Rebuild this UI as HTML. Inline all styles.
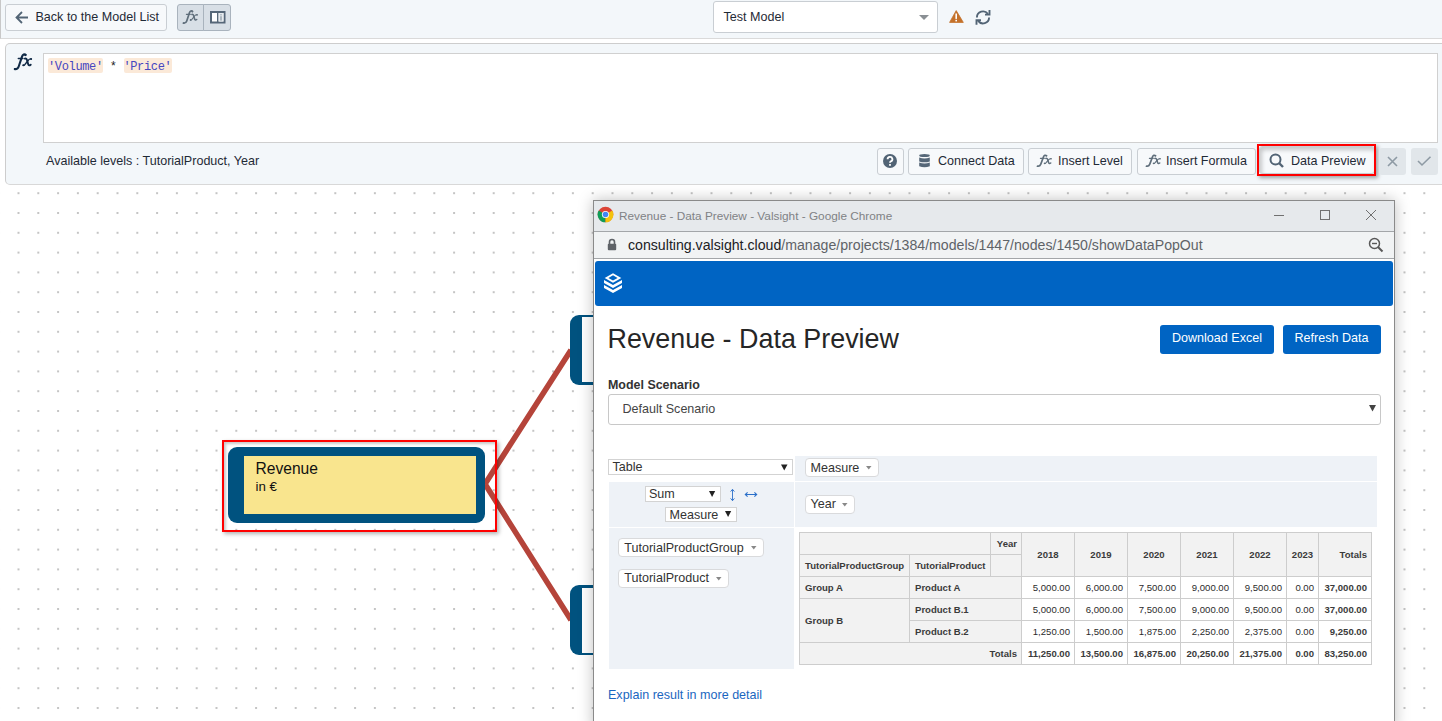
<!DOCTYPE html>
<html><head><meta charset="utf-8">
<style>
*{box-sizing:border-box;margin:0;padding:0}
html,body{width:1442px;height:721px;overflow:hidden;background:#fff;font-family:"Liberation Sans",sans-serif;color:#222;position:relative}
.a{position:absolute}
.btn{position:absolute;border:1px solid #c9ced3;border-radius:3px;background:#f7f9fb;font-size:12.55px;color:#1f2a36;white-space:nowrap}
.t{position:absolute;white-space:nowrap;line-height:1;font-size:12.55px;color:#1f2a36}
</style></head><body>

<!-- dotted canvas -->
<svg class="a" style="left:0;top:185px" width="1442" height="536">
<defs><pattern id="dots" x="17.5" y="7.2" width="19.8" height="19.8" patternUnits="userSpaceOnUse"><rect x="0" y="0" width="2" height="2" fill="#c4c4c4"/></pattern></defs>
<rect width="1442" height="536" fill="url(#dots)"/>
</svg>

<!-- top toolbar -->
<div class="a" style="left:0;top:0;width:1442px;height:39px;background:#f3f7fa;border-bottom:1px solid #dadada;border-left:1px solid #c8c8c8"></div>
<div class="btn" style="left:5px;top:4px;width:162px;height:27px"></div>
<svg class="a" style="left:14px;top:10px" width="16" height="15"><path d="M14 7.5H2.5M8 2L2.5 7.5 8 13" fill="none" stroke="#526475" stroke-width="1.8"/></svg>
<div class="t" style="left:35.5px;top:10.5px;font-size:12.55px;color:#1f2a36">Back to the Model List</div>

<div class="a" style="left:177px;top:4px;width:27px;height:27px;background:#d8dfe6;border:1px solid #a9b3bd;border-radius:3px 0 0 3px"></div>
<div class="a" style="left:203px;top:4px;width:28px;height:27px;background:#d8dfe6;border:1px solid #a9b3bd;border-radius:0 3px 3px 0"></div>

<svg class="a" style="left:209.5px;top:10.5px" width="16" height="13"><rect x="1" y="1" width="13.5" height="10.5" fill="#fff" stroke="#566778" stroke-width="2"/><rect x="7" y="1" width="1.6" height="10.5" fill="#566778"/><rect x="8.6" y="2" width="4.9" height="8.5" fill="#e6eaee"/><rect x="10.3" y="3.2" width="1.4" height="1.2" fill="#95a2ad"/><rect x="10.3" y="5.2" width="1.4" height="4.4" fill="#95a2ad"/></svg>

<div class="a" style="left:713px;top:1px;width:225px;height:32px;background:#fff;border:1px solid #c9ced3;border-radius:3px"></div>
<div class="t" style="left:723.5px;top:10.5px;font-size:12.55px;color:#1f2a36">Test Model</div>
<svg class="a" style="left:919px;top:15px" width="11" height="5"><path d="M0 0H10L5 5Z" fill="#8a8f94"/></svg>
<svg class="a" style="left:948.5px;top:9.5px" width="15" height="13"><path d="M7.2 .6L14.2 12.2Q14.4 12.6 14 12.6H.9Q.5 12.6 .7 12.2Z" fill="#c4712a" stroke="#c4712a" stroke-width=".8" stroke-linejoin="round"/><rect x="6.4" y="3.5" width="1.6" height="5.4" fill="#fff"/><rect x="6.4" y="9.8" width="1.6" height="1.6" fill="#fff"/></svg>
<svg class="a" style="left:975px;top:9px" width="16" height="17" viewBox="0 0 16 17"><path d="M1.9 8.4A6.1 6.1 0 0 1 12.9 4.9M14.1 8.4A6.1 6.1 0 0 1 3.1 11.9" fill="none" stroke="#526475" stroke-width="1.9"/><path d="M14.5 1V5.6H10" fill="none" stroke="#526475" stroke-width="1.9"/><path d="M1.5 15.8V11.2H6" fill="none" stroke="#526475" stroke-width="1.9"/></svg>

<!-- formula panel -->
<div class="a" style="left:5px;top:43px;width:1450px;height:142px;background:#f3f7fa;border:1px solid #cdcdcd;border-bottom-color:#d8d8d8;border-radius:5px"></div>

<div class="a" style="left:43px;top:53px;width:1395px;height:90px;background:#fff;border:1px solid #d0d0d0"></div>
<div class="a" style="left:48px;top:58px;width:55px;height:15px;background:#fbe9d8;border-radius:2px"></div>
<div class="a" style="left:124px;top:58px;width:48px;height:15px;background:#fbe9d8;border-radius:2px"></div>
<div class="t" style="left:48px;top:60.5px;font-family:'Liberation Mono';font-size:12px;letter-spacing:-0.35px;color:#222"><span style="color:#4646c0">'Volume'</span> * <span style="color:#4646c0">'Price'</span></div>
<div class="t" style="left:46px;top:155px;font-size:12.55px;color:#1f2a36">Available levels : TutorialProduct, Year</div>

<!-- buttons row -->
<div class="btn" style="left:877px;top:148px;width:27px;height:27px"></div>
<svg class="a" style="left:882px;top:153px" width="16" height="16"><circle cx="8" cy="8" r="7" fill="#526475"/><path d="M5.6 6.2A2.4 2.3 0 1 1 8.8 8.4C8.1 8.8 8 9.1 8 9.8" fill="none" stroke="#fff" stroke-width="1.8"/><rect x="7.1" y="11" width="1.8" height="1.8" fill="#fff"/></svg>
<div class="btn" style="left:908px;top:148px;width:116px;height:27px"></div>
<svg class="a" style="left:918.5px;top:154px" width="11" height="14" viewBox="0 0 11 14"><ellipse cx="5.5" cy="1.5" rx="5.3" ry="1.5" fill="#566778"/><path d="M0.2 3.6Q5.5 5.4 10.8 3.6V7.4Q5.5 9.2 0.2 7.4Z" fill="#566778"/><path d="M0.2 8.6Q5.5 10.4 10.8 8.6V12.3Q5.5 14.4 0.2 12.3Z" fill="#566778"/></svg>
<div class="t" style="left:938px;top:155px">Connect Data</div>
<div class="btn" style="left:1028px;top:148px;width:104px;height:27px"></div>

<div class="t" style="left:1058px;top:155px">Insert Level</div>
<div class="btn" style="left:1137px;top:148px;width:119px;height:27px"></div>

<div class="t" style="left:1166px;top:155px">Insert Formula</div>
<div class="btn" style="left:1259px;top:146px;width:116px;height:28px;box-shadow:inset 2px 3px 4px rgba(0,0,0,.2)"></div>
<svg class="a" style="left:1269px;top:153px" width="16" height="16"><circle cx="6.5" cy="6.5" r="5" fill="none" stroke="#526475" stroke-width="2"/><path d="M10 10L14 14" stroke="#526475" stroke-width="2.4"/></svg>
<div class="t" style="left:1291px;top:155px">Data Preview</div>
<div class="a" style="left:1257px;top:144px;width:119px;height:32px;border:2px solid #f00;box-shadow:2px 2px 4px rgba(0,0,0,.35)"></div>
<div class="a" style="left:1379px;top:148px;width:27px;height:27px;background:#e1e6ea;border-radius:3px"></div>
<svg class="a" style="left:1387px;top:156px" width="11" height="11"><path d="M1 1L10 10M10 1L1 10" stroke="#8e9aa4" stroke-width="1.6"/></svg>
<div class="a" style="left:1411px;top:148px;width:27px;height:27px;background:#e1e6ea;border-radius:3px"></div>
<svg class="a" style="left:1417px;top:156px" width="15" height="11"><path d="M1 5L5 9 13.5 0.7" fill="none" stroke="#8e9aa4" stroke-width="1.6"/></svg>

<svg class="a" style="left:0;top:0" width="1442" height="200"><defs><g id="fxg"><g fill="none" stroke="currentColor" stroke-linecap="round"><path d="M25.6 54.9C24.4 53.9 22.8 54.3 22.1 56.3L18.7 66.5C18.1 68.4 16.9 69.3 14.8 69.1" stroke-width="2.1"/><path d="M18.3 58.5H23" stroke-width="1.4"/><path d="M24.9 58.6C26 58.1 26.6 58.9 27 60.1L28.2 64.2C28.6 65.5 29.5 65.7 30.7 64.7" stroke-width="1.9"/><path d="M31 59.1C30 58.6 29.1 59.3 28.1 60.5L24.9 64.5C24.1 65.4 23.5 65.6 23.1 65.3" stroke-width="1.3"/></g><g fill="currentColor"><circle cx="25.4" cy="55" r="1.15"/><circle cx="31.1" cy="59" r="1.05"/><circle cx="23.4" cy="65.2" r="1.05"/><circle cx="15" cy="69" r="1.1"/></g></g></defs><use href="#fxg" style="color:#112a46"/><use href="#fxg" style="color:#5f6e7b" transform="translate(1037 154.8) scale(0.83 0.75) translate(-14.2 -53.75)"/><use href="#fxg" style="color:#5f6e7b" transform="translate(1146 154.8) scale(0.83 0.75) translate(-14.2 -53.75)"/><use href="#fxg" style="color:#5f6e7b" transform="translate(183 10.4) scale(0.83 0.83) translate(-14.2 -53.75)"/></svg>
<!-- nodes -->
<svg class="a" style="left:0;top:0" width="1442" height="721">
<path d="M485 484L571 350M485 484L571 620" stroke="#b5443a" stroke-width="5.6" fill="none"/>
</svg>
<div class="a" style="left:222px;top:440px;width:275px;height:92px;border:2px solid #f00;box-shadow:2px 2px 4px rgba(0,0,0,.3), inset 2px 2px 3px rgba(0,0,0,.22)"></div>
<div class="a" style="left:228px;top:447px;width:257px;height:76px;background:#00527f;border-radius:9px"></div>
<div class="a" style="left:244px;top:456px;width:232px;height:58px;background:#f9e58e"></div>
<div class="t" style="left:255.5px;top:461px;font-size:15.6px;color:#111">Revenue</div>
<div class="t" style="left:255.5px;top:479.5px;font-size:13.3px;color:#111">in €</div>

<div class="a" style="left:570px;top:315px;width:40px;height:70px;background:#00527f;border-radius:9px"></div>
<div class="a" style="left:582px;top:317px;width:30px;height:65px;background:#fff"></div>
<div class="a" style="left:570px;top:585px;width:40px;height:70px;background:#00527f;border-radius:9px"></div>
<div class="a" style="left:582px;top:588px;width:30px;height:65px;background:#fff"></div>

<!-- chrome window -->
<div id="win" class="a" style="left:593px;top:200px;width:802px;height:530px;background:#fff;border:1px solid #8a8a8a;box-shadow:0 0 14px rgba(0,0,0,.25)">
</div>
<div class="a" style="left:594px;top:201px;width:800px;height:31px;background:#e6e9ec;border-bottom:1px solid #a3a6a9"></div>
<svg class="a" style="left:597px;top:206px" width="17" height="17" viewBox="0 0 17 17">
<circle cx="8.5" cy="8.5" r="7.8" fill="#db4437"/>
<path d="M8.5 8.5L1.7 4.6A7.8 7.8 0 0 0 8.5 16.3Z" fill="#0f9d58"/>
<path d="M8.5 8.5L8.5 16.3A7.8 7.8 0 0 0 15.3 4.6Z" fill="#f4c20d"/>
<path d="M8.5 4.6H15.3" stroke="#f4c20d" stroke-width="0"/>
<circle cx="8.5" cy="8.5" r="3.6" fill="#fff"/><circle cx="8.5" cy="8.5" r="2.8" fill="#4285f4"/>
</svg>
<div class="t" style="left:619px;top:211px;font-size:11.8px;color:#808285">Revenue - Data Preview - Valsight - Google Chrome</div>
<div class="a" style="left:1274px;top:215px;width:10px;height:1px;background:#707070"></div>
<div class="a" style="left:1320px;top:210px;width:10px;height:10px;border:1px solid #707070"></div>
<svg class="a" style="left:1365px;top:209px" width="12" height="12"><path d="M1 1L11 11M11 1L1 11" stroke="#707070" stroke-width="1"/></svg>
<div class="a" style="left:594px;top:232px;width:800px;height:27px;background:#f1f3f4;border-bottom:1px solid #a3a6a9"></div>
<svg class="a" style="left:607px;top:238px" width="10" height="13"><path d="M2.5 6V4A2.5 2.5 0 0 1 7.5 4V6" fill="none" stroke="#5f6368" stroke-width="1.6"/><rect x="0.8" y="5.8" width="8.4" height="6.5" rx="1" fill="#5f6368"/></svg>
<div class="t" style="left:628px;top:238px;font-size:14.15px;color:#5f6368"><span style="color:#202124">consulting.valsight.cloud</span>/manage/projects/1384/models/1447/nodes/1450/showDataPopOut</div>
<svg class="a" style="left:1368px;top:237px" width="16" height="16"><circle cx="6.5" cy="6.5" r="5" fill="none" stroke="#585858" stroke-width="1.5"/><path d="M4 6.5H9" stroke="#585858" stroke-width="1.4"/><path d="M10 10L14.5 14.5" stroke="#585858" stroke-width="2"/></svg>
<div class="a" style="left:595px;top:261px;width:798px;height:45px;background:#0064c3;border-radius:3px"></div>
<svg class="a" style="left:604px;top:273px" width="18" height="20" viewBox="0 0 18 20"><path fill="#fff" fill-rule="evenodd" d="M9 0.3L17.3 5 9 9.8 0.7 5Z M9 2.3L13.6 4.9 9 7.5 4.4 4.9Z"/><path fill="#fff" d="M0 7L9 12 18 7V10L9 15 0 10Z"/><path fill="#fff" d="M0 12L9 17 18 12V15L9 20 0 15Z"/></svg>
<div class="t" style="left:607.5px;top:326px;font-size:26.9px;color:#262626">Revenue - Data Preview</div>
<div class="a" style="left:1160px;top:325px;width:114px;height:29px;background:#0064c3;border-radius:3px"></div>
<div class="t" style="left:1172px;top:332px;color:#fff">Download Excel</div>
<div class="a" style="left:1283px;top:325px;width:98px;height:29px;background:#0064c3;border-radius:3px"></div>
<div class="t" style="left:1294.5px;top:332px;color:#fff">Refresh Data</div>
<div class="t" style="left:608px;top:379px;font-weight:bold;font-size:12.45px;color:#333">Model Scenario</div>
<div class="a" style="left:608px;top:394px;width:773px;height:31px;background:#fff;border:1px solid #c8c8c8;border-radius:3px"></div>
<div class="t" style="left:622.5px;top:403px;color:#444">Default Scenario</div>
<svg class="a" style="left:1369px;top:405px" width="7" height="7"><path d="M0 0H7L3.5 6.5Z" fill="#444"/></svg>
<!--PIVOT-->
<div class="a" style="left:795px;top:456px;width:582px;height:25px;background:#eef2f7"></div>
<div class="a" style="left:609px;top:482px;width:185px;height:45px;background:#eef2f7"></div>
<div class="a" style="left:795px;top:482px;width:582px;height:45px;background:#eef2f7"></div>
<div class="a" style="left:609px;top:528px;width:185px;height:141px;background:#eef2f7"></div>
<div class="a" style="left:608px;top:459px;width:185px;height:16px;background:#fff;border:1px solid #d3d3d3"></div>
<div class="t" style="left:612.5px;top:461px;color:#333">Table</div>
<svg class="a" style="left:781px;top:463.7px" width="7" height="7"><path d="M0 .5H6.5L3.25 6.5Z" fill="#222"/></svg>
<div class="a" style="left:645px;top:486px;width:76px;height:16px;background:#fff;border:1px solid #d3d3d3"></div>
<div class="t" style="left:649px;top:488px;color:#333">Sum</div>
<svg class="a" style="left:709px;top:491px" width="7" height="7"><path d="M0 0H6.2L3.1 6Z" fill="#222"/></svg>
<svg class="a" style="left:729px;top:488px" width="8" height="14"><path d="M3.5 1.5V12.5M1.6 3.6L3.5 1.3 5.4 3.6M1.6 10.4L3.5 12.7 5.4 10.4" fill="none" stroke="#2a6fc9" stroke-width="0.9"/></svg>
<svg class="a" style="left:744px;top:490px" width="15" height="9"><path d="M1.5 4.5H12.5M3.6 2.4L1.3 4.5 3.6 6.6M10.4 2.4L12.7 4.5 10.4 6.6" fill="none" stroke="#2a6fc9" stroke-width="1.1"/></svg>
<div class="a" style="left:665px;top:507px;width:72px;height:15px;background:#fff;border:1px solid #d3d3d3"></div>
<div class="t" style="left:669.5px;top:508.5px;color:#333">Measure</div>
<svg class="a" style="left:725px;top:511px" width="7" height="7"><path d="M0 0H6.2L3.1 6Z" fill="#222"/></svg>
<div class="a" style="left:804.5px;top:458.4px;width:74px;height:19px;background:#fff;border:1px solid #d9dadc;border-radius:4px"></div>
<div class="t" style="left:810.5px;top:461.9px;color:#333">Measure</div>
<svg class="a" style="left:865.5px;top:466.4px" width="6" height="4"><path d="M0 0H5.5L2.75 3.5Z" fill="#888"/></svg>
<div class="a" style="left:804.5px;top:494.5px;width:50px;height:19px;background:#fff;border:1px solid #d9dadc;border-radius:4px"></div>
<div class="t" style="left:810.5px;top:498.0px;color:#333">Year</div>
<svg class="a" style="left:841.5px;top:502.5px" width="6" height="4"><path d="M0 0H5.5L2.75 3.5Z" fill="#888"/></svg>
<div class="a" style="left:618.3px;top:538.4px;width:146px;height:19px;background:#fff;border:1px solid #d9dadc;border-radius:4px"></div>
<div class="t" style="left:624.3px;top:541.9px;color:#333">TutorialProductGroup</div>
<svg class="a" style="left:751.3px;top:546.4px" width="6" height="4"><path d="M0 0H5.5L2.75 3.5Z" fill="#888"/></svg>
<div class="a" style="left:618.3px;top:568.9px;width:111px;height:19px;background:#fff;border:1px solid #d9dadc;border-radius:4px"></div>
<div class="t" style="left:624.3px;top:572.4px;color:#333">TutorialProduct</div>
<svg class="a" style="left:716.3px;top:576.9px" width="6" height="4"><path d="M0 0H5.5L2.75 3.5Z" fill="#888"/></svg>
<div class="a" style="left:799px;top:532px;width:192px;height:23px;background:#f2f2f2;border:1px solid #cdcdcd"></div>
<div class="a" style="left:990px;top:532px;width:32px;height:23px;background:#f2f2f2;border:1px solid #cdcdcd"></div>
<div class="t" style="left:990px;width:27px;text-align:right;top:539.4px;font-size:9.57px;font-weight:bold;color:#3b3b3b">Year</div>
<div class="a" style="left:1021px;top:532px;width:54px;height:45px;background:#f2f2f2;border:1px solid #cdcdcd"></div>
<div class="t" style="left:1021px;width:54px;text-align:center;top:550.4px;font-size:9.57px;font-weight:bold;color:#3b3b3b">2018</div>
<div class="a" style="left:1074px;top:532px;width:54px;height:45px;background:#f2f2f2;border:1px solid #cdcdcd"></div>
<div class="t" style="left:1074px;width:54px;text-align:center;top:550.4px;font-size:9.57px;font-weight:bold;color:#3b3b3b">2019</div>
<div class="a" style="left:1127px;top:532px;width:54px;height:45px;background:#f2f2f2;border:1px solid #cdcdcd"></div>
<div class="t" style="left:1127px;width:54px;text-align:center;top:550.4px;font-size:9.57px;font-weight:bold;color:#3b3b3b">2020</div>
<div class="a" style="left:1180px;top:532px;width:54px;height:45px;background:#f2f2f2;border:1px solid #cdcdcd"></div>
<div class="t" style="left:1180px;width:54px;text-align:center;top:550.4px;font-size:9.57px;font-weight:bold;color:#3b3b3b">2021</div>
<div class="a" style="left:1233px;top:532px;width:54px;height:45px;background:#f2f2f2;border:1px solid #cdcdcd"></div>
<div class="t" style="left:1233px;width:54px;text-align:center;top:550.4px;font-size:9.57px;font-weight:bold;color:#3b3b3b">2022</div>
<div class="a" style="left:1286px;top:532px;width:33px;height:45px;background:#f2f2f2;border:1px solid #cdcdcd"></div>
<div class="t" style="left:1286px;width:33px;text-align:center;top:550.4px;font-size:9.57px;font-weight:bold;color:#3b3b3b">2023</div>
<div class="a" style="left:1318px;top:532px;width:54px;height:45px;background:#f2f2f2;border:1px solid #cdcdcd"></div>
<div class="t" style="left:1318px;width:49px;text-align:right;top:550.4px;font-size:9.57px;font-weight:bold;color:#3b3b3b">Totals</div>
<div class="a" style="left:799px;top:554px;width:111px;height:23px;background:#f2f2f2;border:1px solid #cdcdcd"></div>
<div class="t" style="left:805px;top:561.4px;font-size:9.57px;font-weight:bold;color:#3b3b3b">TutorialProductGroup</div>
<div class="a" style="left:909px;top:554px;width:82px;height:23px;background:#f2f2f2;border:1px solid #cdcdcd"></div>
<div class="t" style="left:915px;top:561.4px;font-size:9.57px;font-weight:bold;color:#3b3b3b">TutorialProduct</div>
<div class="a" style="left:990px;top:554px;width:32px;height:23px;background:#f2f2f2;border:1px solid #cdcdcd"></div>
<div class="a" style="left:799px;top:576px;width:111px;height:23px;background:#f2f2f2;border:1px solid #cdcdcd"></div>
<div class="t" style="left:805px;top:583.4px;font-size:9.57px;font-weight:bold;color:#3b3b3b">Group A</div>
<div class="a" style="left:909px;top:576px;width:113px;height:23px;background:#f2f2f2;border:1px solid #cdcdcd"></div>
<div class="t" style="left:915px;top:583.4px;font-size:9.57px;font-weight:bold;color:#3b3b3b">Product A</div>
<div class="a" style="left:799px;top:598px;width:111px;height:45px;background:#f2f2f2;border:1px solid #cdcdcd"></div>
<div class="t" style="left:805px;top:616.4px;font-size:9.57px;font-weight:bold;color:#3b3b3b">Group B</div>
<div class="a" style="left:909px;top:598px;width:113px;height:23px;background:#f2f2f2;border:1px solid #cdcdcd"></div>
<div class="t" style="left:915px;top:605.4px;font-size:9.57px;font-weight:bold;color:#3b3b3b">Product B.1</div>
<div class="a" style="left:909px;top:620px;width:113px;height:23px;background:#f2f2f2;border:1px solid #cdcdcd"></div>
<div class="t" style="left:915px;top:627.4px;font-size:9.57px;font-weight:bold;color:#3b3b3b">Product B.2</div>
<div class="a" style="left:799px;top:642px;width:223px;height:23px;background:#f2f2f2;border:1px solid #cdcdcd"></div>
<div class="t" style="left:799px;width:218px;text-align:right;top:649.4px;font-size:9.57px;font-weight:bold;color:#3b3b3b">Totals</div>
<div class="a" style="left:1021px;top:576px;width:54px;height:23px;background:#fff;border:1px solid #cdcdcd"></div>
<div class="t" style="left:1021px;width:49px;text-align:right;top:583.4px;font-size:9.57px;font-weight:normal;color:#2b2b2b">5,000.00</div>
<div class="a" style="left:1074px;top:576px;width:54px;height:23px;background:#fff;border:1px solid #cdcdcd"></div>
<div class="t" style="left:1074px;width:49px;text-align:right;top:583.4px;font-size:9.57px;font-weight:normal;color:#2b2b2b">6,000.00</div>
<div class="a" style="left:1127px;top:576px;width:54px;height:23px;background:#fff;border:1px solid #cdcdcd"></div>
<div class="t" style="left:1127px;width:49px;text-align:right;top:583.4px;font-size:9.57px;font-weight:normal;color:#2b2b2b">7,500.00</div>
<div class="a" style="left:1180px;top:576px;width:54px;height:23px;background:#fff;border:1px solid #cdcdcd"></div>
<div class="t" style="left:1180px;width:49px;text-align:right;top:583.4px;font-size:9.57px;font-weight:normal;color:#2b2b2b">9,000.00</div>
<div class="a" style="left:1233px;top:576px;width:54px;height:23px;background:#fff;border:1px solid #cdcdcd"></div>
<div class="t" style="left:1233px;width:49px;text-align:right;top:583.4px;font-size:9.57px;font-weight:normal;color:#2b2b2b">9,500.00</div>
<div class="a" style="left:1286px;top:576px;width:33px;height:23px;background:#fff;border:1px solid #cdcdcd"></div>
<div class="t" style="left:1286px;width:28px;text-align:right;top:583.4px;font-size:9.57px;font-weight:normal;color:#2b2b2b">0.00</div>
<div class="a" style="left:1318px;top:576px;width:54px;height:23px;background:#fff;border:1px solid #cdcdcd"></div>
<div class="t" style="left:1318px;width:49px;text-align:right;top:583.4px;font-size:9.57px;font-weight:bold;color:#3b3b3b">37,000.00</div>
<div class="a" style="left:1021px;top:598px;width:54px;height:23px;background:#fff;border:1px solid #cdcdcd"></div>
<div class="t" style="left:1021px;width:49px;text-align:right;top:605.4px;font-size:9.57px;font-weight:normal;color:#2b2b2b">5,000.00</div>
<div class="a" style="left:1074px;top:598px;width:54px;height:23px;background:#fff;border:1px solid #cdcdcd"></div>
<div class="t" style="left:1074px;width:49px;text-align:right;top:605.4px;font-size:9.57px;font-weight:normal;color:#2b2b2b">6,000.00</div>
<div class="a" style="left:1127px;top:598px;width:54px;height:23px;background:#fff;border:1px solid #cdcdcd"></div>
<div class="t" style="left:1127px;width:49px;text-align:right;top:605.4px;font-size:9.57px;font-weight:normal;color:#2b2b2b">7,500.00</div>
<div class="a" style="left:1180px;top:598px;width:54px;height:23px;background:#fff;border:1px solid #cdcdcd"></div>
<div class="t" style="left:1180px;width:49px;text-align:right;top:605.4px;font-size:9.57px;font-weight:normal;color:#2b2b2b">9,000.00</div>
<div class="a" style="left:1233px;top:598px;width:54px;height:23px;background:#fff;border:1px solid #cdcdcd"></div>
<div class="t" style="left:1233px;width:49px;text-align:right;top:605.4px;font-size:9.57px;font-weight:normal;color:#2b2b2b">9,500.00</div>
<div class="a" style="left:1286px;top:598px;width:33px;height:23px;background:#fff;border:1px solid #cdcdcd"></div>
<div class="t" style="left:1286px;width:28px;text-align:right;top:605.4px;font-size:9.57px;font-weight:normal;color:#2b2b2b">0.00</div>
<div class="a" style="left:1318px;top:598px;width:54px;height:23px;background:#fff;border:1px solid #cdcdcd"></div>
<div class="t" style="left:1318px;width:49px;text-align:right;top:605.4px;font-size:9.57px;font-weight:bold;color:#3b3b3b">37,000.00</div>
<div class="a" style="left:1021px;top:620px;width:54px;height:23px;background:#fff;border:1px solid #cdcdcd"></div>
<div class="t" style="left:1021px;width:49px;text-align:right;top:627.4px;font-size:9.57px;font-weight:normal;color:#2b2b2b">1,250.00</div>
<div class="a" style="left:1074px;top:620px;width:54px;height:23px;background:#fff;border:1px solid #cdcdcd"></div>
<div class="t" style="left:1074px;width:49px;text-align:right;top:627.4px;font-size:9.57px;font-weight:normal;color:#2b2b2b">1,500.00</div>
<div class="a" style="left:1127px;top:620px;width:54px;height:23px;background:#fff;border:1px solid #cdcdcd"></div>
<div class="t" style="left:1127px;width:49px;text-align:right;top:627.4px;font-size:9.57px;font-weight:normal;color:#2b2b2b">1,875.00</div>
<div class="a" style="left:1180px;top:620px;width:54px;height:23px;background:#fff;border:1px solid #cdcdcd"></div>
<div class="t" style="left:1180px;width:49px;text-align:right;top:627.4px;font-size:9.57px;font-weight:normal;color:#2b2b2b">2,250.00</div>
<div class="a" style="left:1233px;top:620px;width:54px;height:23px;background:#fff;border:1px solid #cdcdcd"></div>
<div class="t" style="left:1233px;width:49px;text-align:right;top:627.4px;font-size:9.57px;font-weight:normal;color:#2b2b2b">2,375.00</div>
<div class="a" style="left:1286px;top:620px;width:33px;height:23px;background:#fff;border:1px solid #cdcdcd"></div>
<div class="t" style="left:1286px;width:28px;text-align:right;top:627.4px;font-size:9.57px;font-weight:normal;color:#2b2b2b">0.00</div>
<div class="a" style="left:1318px;top:620px;width:54px;height:23px;background:#fff;border:1px solid #cdcdcd"></div>
<div class="t" style="left:1318px;width:49px;text-align:right;top:627.4px;font-size:9.57px;font-weight:bold;color:#3b3b3b">9,250.00</div>
<div class="a" style="left:1021px;top:642px;width:54px;height:23px;background:#fff;border:1px solid #cdcdcd"></div>
<div class="t" style="left:1021px;width:49px;text-align:right;top:649.4px;font-size:9.57px;font-weight:bold;color:#3b3b3b">11,250.00</div>
<div class="a" style="left:1074px;top:642px;width:54px;height:23px;background:#fff;border:1px solid #cdcdcd"></div>
<div class="t" style="left:1074px;width:49px;text-align:right;top:649.4px;font-size:9.57px;font-weight:bold;color:#3b3b3b">13,500.00</div>
<div class="a" style="left:1127px;top:642px;width:54px;height:23px;background:#fff;border:1px solid #cdcdcd"></div>
<div class="t" style="left:1127px;width:49px;text-align:right;top:649.4px;font-size:9.57px;font-weight:bold;color:#3b3b3b">16,875.00</div>
<div class="a" style="left:1180px;top:642px;width:54px;height:23px;background:#fff;border:1px solid #cdcdcd"></div>
<div class="t" style="left:1180px;width:49px;text-align:right;top:649.4px;font-size:9.57px;font-weight:bold;color:#3b3b3b">20,250.00</div>
<div class="a" style="left:1233px;top:642px;width:54px;height:23px;background:#fff;border:1px solid #cdcdcd"></div>
<div class="t" style="left:1233px;width:49px;text-align:right;top:649.4px;font-size:9.57px;font-weight:bold;color:#3b3b3b">21,375.00</div>
<div class="a" style="left:1286px;top:642px;width:33px;height:23px;background:#fff;border:1px solid #cdcdcd"></div>
<div class="t" style="left:1286px;width:28px;text-align:right;top:649.4px;font-size:9.57px;font-weight:bold;color:#3b3b3b">0.00</div>
<div class="a" style="left:1318px;top:642px;width:54px;height:23px;background:#fff;border:1px solid #cdcdcd"></div>
<div class="t" style="left:1318px;width:49px;text-align:right;top:649.4px;font-size:9.57px;font-weight:bold;color:#3b3b3b">83,250.00</div>
<div class="t" style="left:608px;top:689px;color:#1a66c0">Explain result in more detail</div>
<!--/PIVOT-->

</body></html>
